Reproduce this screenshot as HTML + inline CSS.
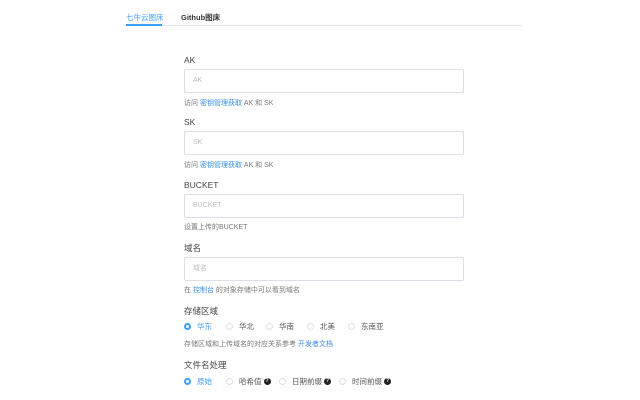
<!DOCTYPE html>
<html><head><meta charset="utf-8"><style>
body{margin:0;width:640px;height:400px;background:#fff;font-family:"Liberation Sans","Noto Sans CJK SC",sans-serif;position:relative;overflow:hidden;color:#333}
.a{position:absolute;white-space:nowrap}
.tabs{position:absolute;left:126px;top:25px;width:396px;height:1px;background:#e4e7ed}
.lbl{font-size:8.5px;color:#444}
.inp{position:absolute;left:184px;width:278px;height:22px;border:1px solid #dcdfe6;border-radius:2px;font-size:7px;color:#bbb;line-height:22px;text-indent:8px}
.help{font-size:7px;color:#777}
.help b{font-weight:normal;color:#3a8ee6}
.r{position:absolute;font-size:7.5px;color:#555;line-height:10px}
.r i{display:inline-block;width:7px;height:7px;border:1px solid #dcdfe6;border-radius:50%;vertical-align:-1px;margin-right:6px;box-sizing:border-box}
.r.on{color:#409eff}.r.on i{border:2.5px solid #409eff}
.q{display:inline-block;width:7px;height:7px;border-radius:50%;background:#222;color:#fff;font-size:5px;line-height:7px;text-align:center;vertical-align:middle;margin-left:2px;font-weight:bold;position:relative;top:-1px}
</style></head><body>
<div class="a" style="left:126px;top:12px;font-size:7.5px;color:#409eff">七牛云图床</div>
<div class="a" style="left:181px;top:12px;font-size:7.5px;color:#333;font-weight:bold">Github图床</div>
<div class="tabs"></div>
<div class="a" style="left:126px;top:24px;width:36px;height:2px;background:#409eff"></div>

<div class="a lbl" style="left:184px;top:55px">AK</div>
<div class="inp" style="top:69px">AK</div>
<div class="a help" style="left:184px;top:98px">访问 <b>密钥管理获取</b> AK 和 SK</div>

<div class="a lbl" style="left:184px;top:117px">SK</div>
<div class="inp" style="top:131px">SK</div>
<div class="a help" style="left:184px;top:160px">访问 <b>密钥管理获取</b> AK 和 SK</div>

<div class="a lbl" style="left:184px;top:180px">BUCKET</div>
<div class="inp" style="top:194px">BUCKET</div>
<div class="a help" style="left:184px;top:222px">设置上传的BUCKET</div>

<div class="a lbl" style="left:184px;top:242px">域名</div>
<div class="inp" style="top:257px">域名</div>
<div class="a help" style="left:184px;top:285px">在 <b>控制台</b> 的对象存储中可以看到域名</div>

<div class="a lbl" style="left:184px;top:305px">存储区域</div>
<div class="r on" style="left:184px;top:322px"><i></i>华东</div>
<div class="r" style="left:226px;top:322px"><i></i>华北</div>
<div class="r" style="left:266px;top:322px"><i></i>华南</div>
<div class="r" style="left:307px;top:322px"><i></i>北美</div>
<div class="r" style="left:348px;top:322px"><i></i>东南亚</div>
<div class="a help" style="left:184px;top:339px">存储区域和上传域名的对应关系参考 <b>开发者文档</b></div>

<div class="a lbl" style="left:184px;top:359px">文件名处理</div>
<div class="r on" style="left:184px;top:377px"><i></i>原始</div>
<div class="r" style="left:226px;top:377px"><i></i>哈希值<span class="q">?</span></div>
<div class="r" style="left:279px;top:377px"><i></i>日期前缀<span class="q">?</span></div>
<div class="r" style="left:339px;top:377px"><i></i>时间前缀<span class="q">?</span></div>
</body></html>
